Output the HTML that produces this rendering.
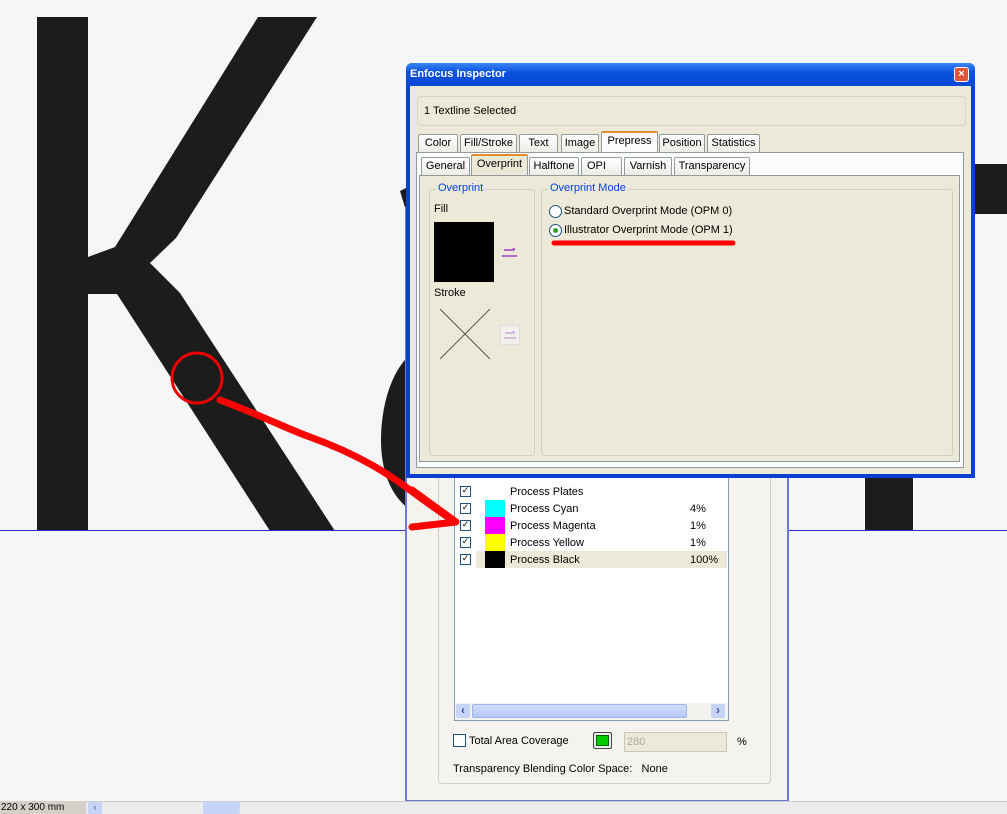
<!DOCTYPE html>
<html><head><meta charset="utf-8"><style>
*{box-sizing:border-box;margin:0;padding:0}
body{width:1007px;height:814px;overflow:hidden;background:#f4f6f8;position:relative;font-family:"Liberation Sans",sans-serif;font-size:11px;color:#000}
.a{position:absolute;white-space:nowrap}
.tab{position:absolute;height:19px;border:1px solid #919b9c;border-bottom:none;background:linear-gradient(#fff,#ecebe6);text-align:center;line-height:17px;font-size:11px;border-radius:2px 2px 0 0}
.tab.on{background:#fcfcfe;border-top:2px solid #e68b2c;height:21px}
.grp{position:absolute;border:1px solid #d0d0bf;border-radius:3px}
.lg{position:absolute;top:-8px;left:6px;background:#ece9d8;padding:0 2px;color:#0046d5}
.cb{position:absolute;width:11px;height:11px;border:1px solid #1c5180;background:#fff;font-size:9px;line-height:9px;text-align:center;font-weight:bold;font-family:"DejaVu Sans",sans-serif}
</style></head><body>
<svg class="a" style="left:0;top:0" width="1007" height="814">
<rect x="37" y="17" width="51" height="514" fill="#1c1c1c"/>
<polygon points="88,257 115,247 258,17 317,17 176,238 150,263 180,293 335,531 270,531 117,294 88,294" fill="#1c1c1c"/>
<polygon points="400,191 420,181 420,235 414,237" fill="#1c1c1c"/>
<path d="M420,348 C395,360 381,400 381,440 C381,470 390,495 410,510 L420,510 Z" fill="#1c1c1c"/>
<rect x="865" y="477" width="48" height="54" fill="#1c1c1c"/>
<rect x="974" y="164" width="33" height="50" fill="#1c1c1c"/>
<line x1="0" y1="530.5" x2="1007" y2="530.5" stroke="#2a2ac0" stroke-width="1"/>
</svg>
<!-- lower panel -->
<div class="a" style="left:405px;top:207px;width:384px;height:595px;background:#f4f3ee;border:2px solid #6a78d8"></div>
<div class="a" style="left:438px;top:450px;width:333px;height:334px;border:1px solid #cfcfc8;border-radius:4px"></div>
<div class="a" style="left:454px;top:470px;width:275px;height:251px;background:#fff;border:1px solid #7f9db9"></div>
<div class="a" style="left:476px;top:551px;width:251px;height:17px;background:#ece9d8"></div>
<div class="cb" style="left:460px;top:486px">✓</div>
<div class="cb" style="left:460px;top:503px">✓</div>
<div class="cb" style="left:460px;top:520px">✓</div>
<div class="cb" style="left:460px;top:537px">✓</div>
<div class="cb" style="left:460px;top:554px">✓</div>
<div class="a" style="left:485px;top:500px;width:20px;height:17px;background:#0ff"></div>
<div class="a" style="left:485px;top:517px;width:20px;height:17px;background:#f0f"></div>
<div class="a" style="left:485px;top:534px;width:20px;height:17px;background:#ff0"></div>
<div class="a" style="left:485px;top:551px;width:20px;height:17px;background:#000"></div>
<div class="a" style="left:510px;top:486px;line-height:12px">Process Plates</div>
<div class="a" style="left:510px;top:503px;line-height:12px">Process Cyan</div>
<div class="a" style="left:510px;top:520px;line-height:12px">Process Magenta</div>
<div class="a" style="left:510px;top:537px;line-height:12px">Process Yellow</div>
<div class="a" style="left:510px;top:554px;line-height:12px">Process Black</div>
<div class="a" style="left:690px;top:503px;line-height:12px">4%</div>
<div class="a" style="left:690px;top:520px;line-height:12px">1%</div>
<div class="a" style="left:690px;top:537px;line-height:12px">1%</div>
<div class="a" style="left:690px;top:554px;line-height:12px">100%</div>
<div class="a" style="left:455px;top:703px;width:273px;height:17px;background:#f3f2ee"></div>
<div class="a" style="left:456px;top:704px;width:14px;height:14px;background:#c6d5f7;border-radius:2px;color:#3050a0;font-size:12px;font-weight:bold;text-align:center;line-height:13px">‹</div>
<div class="a" style="left:472px;top:704px;width:215px;height:14px;background:linear-gradient(#d0dcfa,#b6c9f5);border-radius:2px;border:1px solid #9eb6ec"></div>
<div class="a" style="left:711px;top:704px;width:14px;height:14px;background:#c6d5f7;border-radius:2px;color:#3050a0;font-size:12px;font-weight:bold;text-align:center;line-height:13px">›</div>
<div class="a" style="left:453px;top:734px;width:13px;height:13px;border:1px solid #1c5180;background:#fff"></div>
<div class="a" style="left:469px;top:735px">Total Area Coverage</div>
<div class="a" style="left:593px;top:732px;width:19px;height:17px;border:1px solid #444;border-radius:2px;background:#ececec;padding:2px"><div style="width:100%;height:100%;background:#0c0;border:1px solid #060"></div></div>
<div class="a" style="left:624px;top:732px;width:103px;height:20px;border:1px solid #c9c7ba;background:#ece9d8;color:#aaa;padding:3px 2px">280</div>
<div class="a" style="left:737px;top:736px">%</div>
<div class="a" style="left:453px;top:763px">Transparency Blending Color Space:&nbsp;&nbsp; None</div>
<!-- status bar -->
<div class="a" style="left:0;top:801px;width:1007px;height:13px;background:#ececec;border-top:1px solid #ccc"></div>
<div class="a" style="left:0;top:801px;width:86px;height:13px;background:#d4d0c8;font-size:10px;line-height:13px;padding-left:1px">220 x 300 mm</div>
<div class="a" style="left:88px;top:802px;width:14px;height:12px;background:#c6d5f7;font-size:9px;text-align:center;color:#3050a0">‹</div>
<div class="a" style="left:203px;top:802px;width:37px;height:12px;background:#c6d5f7;border-radius:2px"></div>
<!-- dialog -->
<div class="a" style="left:406px;top:63px;width:569px;height:415px;background:#0a3fd0;border-radius:6px 6px 0 0"></div>
<div class="a" style="left:406px;top:63px;width:569px;height:23px;background:linear-gradient(#3c86f4,#0a52e0 40%,#0848d4);border-radius:6px 6px 0 0;color:#fff;font-weight:bold;font-size:11px;line-height:23px;padding-left:4px">Enfocus Inspector</div>
<div class="a" style="left:954px;top:67px;width:15px;height:15px;background:#e1533a;border:1px solid #fff;border-radius:3px;color:#fff;font-size:11px;line-height:12px;text-align:center;font-weight:bold">×</div>
<div class="a" style="left:410px;top:86px;width:561px;height:388px;background:#ece9d8"></div>
<div class="a" style="left:417px;top:96px;width:549px;height:30px;border:1px solid #d6d3c4;border-radius:4px;padding:8px 6px">1 Textline Selected</div>
<div class="tab" style="left:418px;top:134px;width:40px">Color</div>
<div class="tab" style="left:460px;top:134px;width:57px">Fill/Stroke</div>
<div class="tab" style="left:519px;top:134px;width:39px">Text</div>
<div class="tab" style="left:561px;top:134px;width:38px">Image</div>
<div class="tab" style="left:659px;top:134px;width:46px">Position</div>
<div class="tab" style="left:707px;top:134px;width:53px">Statistics</div>
<div class="a" style="left:416px;top:152px;width:548px;height:316px;background:#fcfcfe;border:1px solid #919b9c"></div>
<div class="tab on" style="left:601px;top:131px;width:57px;border-bottom:none;line-height:17px">Prepress</div>
<div class="tab" style="left:421px;top:157px;width:49px">General</div>
<div class="tab" style="left:529px;top:157px;width:50px">Halftone</div>
<div class="tab" style="left:581px;top:157px;width:41px;text-align:left;padding-left:5px">OPI</div>
<div class="tab" style="left:624px;top:157px;width:48px">Varnish</div>
<div class="tab" style="left:674px;top:157px;width:76px">Transparency</div>
<div class="a" style="left:419px;top:175px;width:541px;height:287px;background:#ece9d8;border:1px solid #919b9c"></div>
<div class="tab on" style="left:471px;top:154px;width:57px;background:#ece9d8">Overprint</div>
<div class="grp" style="left:429px;top:189px;width:106px;height:267px"><div class="lg">Overprint</div></div>
<div class="a" style="left:434px;top:203px">Fill</div>
<div class="a" style="left:434px;top:222px;width:60px;height:60px;background:#000"></div>
<svg class="a" style="left:500px;top:246px" width="20" height="14"><path d="M4,4 H14 M13,2 L15,4 M2,10 H17" stroke="#a040c0" stroke-width="1.5" fill="none"/></svg>
<div class="a" style="left:434px;top:287px">Stroke</div>
<svg class="a" style="left:438px;top:307px" width="55" height="55"><line x1="2" y1="2" x2="52" y2="52" stroke="#555"/><line x1="52" y1="2" x2="2" y2="52" stroke="#555"/></svg>
<div class="a" style="left:500px;top:325px;width:20px;height:20px;background:#f2f0ea;border:1px solid #ddd"><svg width="18" height="18"><path d="M4,7 H13 M12,5 L14,7 M3,12 H15" stroke="#d0a8d8" stroke-width="1.5" fill="none"/></svg></div>
<div class="grp" style="left:541px;top:189px;width:412px;height:267px"><div class="lg">Overprint Mode</div></div>
<div class="a" style="left:549px;top:205px;width:13px;height:13px;border:1px solid #1c5180;border-radius:50%;background:#fff"></div>
<div class="a" style="left:564px;top:205px">Standard Overprint Mode (OPM 0)</div>
<div class="a" style="left:549px;top:224px;width:13px;height:13px;border:1px solid #1c5180;border-radius:50%;background:#fff"><div style="margin:3px;width:5px;height:5px;border-radius:50%;background:#2fa12f"></div></div>
<div class="a" style="left:564px;top:224px">Illustrator Overprint Mode (OPM 1)</div>
<svg class="a" style="left:0;top:0" width="1007" height="814">
<line x1="554" y1="243" x2="733" y2="243" stroke="#f00" stroke-width="5" stroke-linecap="round"/>
<circle cx="197" cy="378" r="25" fill="none" stroke="#e00" stroke-width="3"/>
<path d="M220,400 C260,415 290,430 310,437 C360,455 390,475 410,490 C430,505 445,515 455,522" fill="none" stroke="#f00" stroke-width="7" stroke-linecap="round"/>
<path d="M412,490 L456,522 L412,527" fill="none" stroke="#f00" stroke-width="7" stroke-linecap="round" stroke-linejoin="round"/>
</svg>
</body></html>
